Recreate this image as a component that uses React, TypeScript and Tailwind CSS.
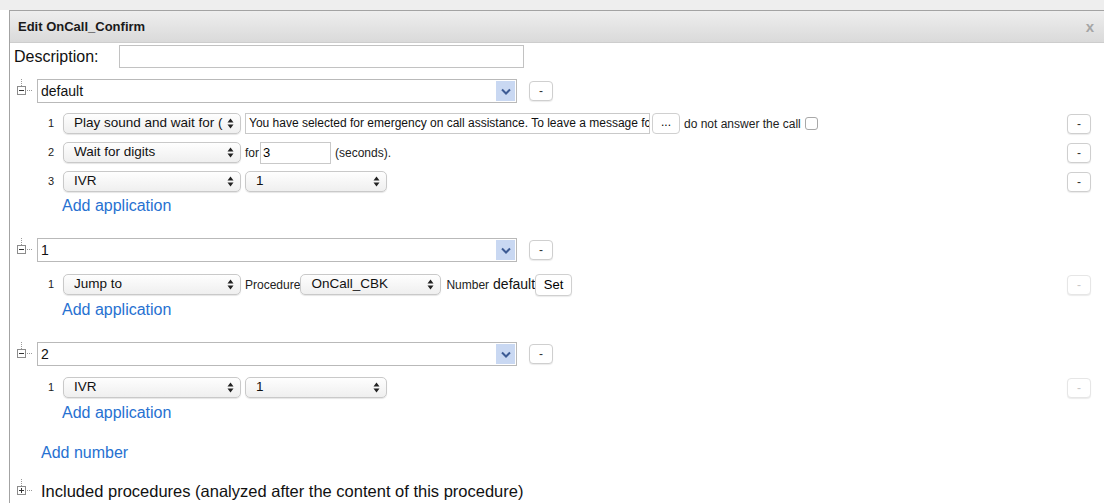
import type { ReactNode } from "react";

const sans = "font-['Liberation_Sans','Helvetica',Arial,sans-serif]";

// Little up/down arrows drawn at the end of a native-looking select
function Updown() {
    return (
        <svg width="7" height="11" viewBox="0 0 7 11" className="shrink-0">
            <path d="M3.5 0.5 L6.5 4.5 L0.5 4.5 Z" fill="#222" />
            <path d="M3.5 10.5 L6.5 6.5 L0.5 6.5 Z" fill="#222" />
        </svg>
    );
}

function MacSelect({ w, children }: { w: string; children: ReactNode }) {
    return (
        <div
            className={`${w} h-[21px] shrink-0 flex items-center justify-between gap-[3px] rounded-[5px] border border-[#c9c9c9] bg-gradient-to-b from-[#fefefe] to-[#efefef] shadow-[0_1px_1px_rgba(0,0,0,0.10)] pl-[10px] pr-[6px] text-[13.5px] text-[#111]`}
        >
            <span className="flex-1 overflow-hidden whitespace-nowrap">{children}</span>
            <Updown />
        </div>
    );
}

function MinusButton({ disabled = false }: { disabled?: boolean }) {
    return (
        <button
            type="button"
            className={`w-[24px] h-[20px] shrink-0 rounded-[4px] border bg-white text-[12px] leading-none flex items-center justify-center shadow-[0_1px_1px_rgba(0,0,0,0.08)] ${
                disabled ? "border-[#e6e6e6] text-[#c8c8c8]" : "border-[#cfcfcf] text-[#333]"
            }`}
        >
            -
        </button>
    );
}

// Tree toggle: boxed minus/plus with dotted connector lines
function TreeToggle({ open = true }: { open?: boolean }) {
    return (
        <svg width="20" height="24" viewBox="0 0 20 24" className="shrink-0">
            <line x1="4.5" y1="0" x2="4.5" y2="7" stroke="#9a9a9a" strokeDasharray="1 1" />
            <rect x="0.5" y="7.5" width="8" height="8" fill="#fff" stroke="#8c8c8c" />
            <line x1="2" y1="11.5" x2="7" y2="11.5" stroke="#333" />
            {!open && <line x1="4.5" y1="9" x2="4.5" y2="14" stroke="#333" />}
            <line x1="10" y1="11.5" x2="16" y2="11.5" stroke="#9a9a9a" strokeDasharray="1 1" />
        </svg>
    );
}

function NumberCombo({ value }: { value: string }) {
    return (
        <div className="flex items-center">
            <TreeToggle />
            <div className="w-[480px] h-[24px] border border-[#b9b9b9] bg-white flex items-center justify-between pl-[3px] pr-[1px] text-[14px] text-[#111]">
                <span>{value}</span>
                <div className="w-[19px] h-[20px] bg-[#c9d8f2] flex items-center justify-center">
                    <svg width="10" height="7" viewBox="0 0 10 7">
                        <path d="M1 1.5 L5 5.5 L9 1.5" fill="none" stroke="#3d5b94" strokeWidth="2" />
                    </svg>
                </div>
            </div>
            <div className="ml-[12px]">
                <MinusButton />
            </div>
        </div>
    );
}

function AppRow({ n, children, disabled = false }: { n: number; children: ReactNode; disabled?: boolean }) {
    return (
        <div className="h-[21px] flex items-center">
            <span className="w-[25px] pl-[10px] text-[11px] text-[#222]">{n}</span>
            <div className="flex-1 flex items-center gap-[4px]">{children}</div>
            <MinusButton disabled={disabled} />
        </div>
    );
}

function AddApplication({ mt }: { mt: string }) {
    return <div className={`${mt} h-[20px] pl-[24px] text-[16px] leading-[20px] text-[#2771d1]`}>Add application</div>;
}

export default function App() {
    return (
        <div className={`${sans} w-[1104px] h-[503px] overflow-hidden bg-white`}>
            <div className="h-[10px] bg-[#eeeeee]" />
            <div className="ml-[9px] h-[493px] border-l border-t border-[#a3a3a3]">
                {/* title bar */}
                <div className="h-[32px] flex items-center justify-between bg-gradient-to-b from-[#eeeeee] to-[#dadada] border-b border-[#cdcdcd] pl-[8px] pr-[10px]">
                    <span className="text-[13px] font-bold text-[#1a1a1a]">Edit OnCall_Confirm</span>
                    <span className="text-[15px] font-bold text-[#a5a5a5] leading-none">x</span>
                </div>

                <div className="pr-[13px]">
                    <div className="mt-[2px] h-[23px] flex items-center">
                        <span className="w-[109px] pl-[4px] text-[16px] text-[#111]">Description:</span>
                        <div className="w-[405px] h-[23px] border border-[#c2c2c2] bg-white" />
                    </div>

                    {/* number "default" */}
                    <div className="mt-[11px] pl-[7px]">
                        <NumberCombo value="default" />
                    </div>
                    <div className="mt-[10px] pl-[28px] flex flex-col gap-[8px]">
                        <AppRow n={1}>
                            <MacSelect w="w-[178px]">Play sound and wait for (</MacSelect>
                            <div className="w-[405px] h-[21px] border border-[#c9c9c9] bg-white pl-[3px] text-[12px] leading-[19px] text-[#111] overflow-hidden whitespace-nowrap">
                                You have selected for emergency on call assistance. To leave a message fc
                            </div>
                            <div className="w-[28px] h-[21px] -ml-[2px] rounded-[4px] border border-[#d0d0d0] bg-white text-[12px] leading-[17px] text-center">
                                ...
                            </div>
                            <span className="text-[12px] text-[#222]">do not answer the call</span>
                            <div className="w-[13px] h-[13px] rounded-[3px] border border-[#a8a8a8] bg-white" />
                        </AppRow>
                        <AppRow n={2}>
                            <MacSelect w="w-[178px]">Wait for digits</MacSelect>
                            <span className="-mr-[3px] text-[12px] text-[#222]">for</span>
                            <div className="w-[71px] h-[22px] border border-[#c9c9c9] bg-white pl-[2px] text-[13px] leading-[20px]">3</div>
                            <span className="text-[12px] text-[#222]">(seconds).</span>
                        </AppRow>
                        <AppRow n={3}>
                            <MacSelect w="w-[178px]">IVR</MacSelect>
                            <MacSelect w="w-[142px]">1</MacSelect>
                        </AppRow>
                    </div>
                    <div className="pl-[28px]">
                        <AddApplication mt="mt-[4px]" />
                    </div>

                    {/* number 1 */}
                    <div className="mt-[22px] pl-[7px]">
                        <NumberCombo value="1" />
                    </div>
                    <div className="mt-[12px] pl-[28px]">
                        <AppRow n={1} disabled>
                            <MacSelect w="w-[178px]">Jump to</MacSelect>
                            <span className="-mr-[4px] text-[12px] text-[#222]">Procedure</span>
                            <MacSelect w="w-[141px]">OnCall_CBK</MacSelect>
                            <span className="ml-[1px] text-[12px] text-[#222]">Number</span>
                            <span className="text-[14px] text-[#111]">default</span>
                            <div className="w-[37px] h-[22px] -ml-[4px] rounded-[4px] border border-[#d0d0d0] bg-white text-[13px] leading-[20px] text-center shadow-[0_1px_1px_rgba(0,0,0,0.08)]">
                                Set
                            </div>
                        </AppRow>
                    </div>
                    <div className="pl-[28px]">
                        <AddApplication mt="mt-[5px]" />
                    </div>

                    {/* number 2 */}
                    <div className="mt-[22px] pl-[7px]">
                        <NumberCombo value="2" />
                    </div>
                    <div className="mt-[11px] pl-[28px]">
                        <AppRow n={1} disabled>
                            <MacSelect w="w-[178px]">IVR</MacSelect>
                            <MacSelect w="w-[142px]">1</MacSelect>
                        </AppRow>
                    </div>
                    <div className="pl-[28px]">
                        <AddApplication mt="mt-[5px]" />
                    </div>

                    <div className="mt-[20px] h-[20px] pl-[31px] text-[16px] leading-[20px] text-[#2771d1]">Add number</div>

                    <div className="mt-[16px] pl-[7px] flex items-center">
                        <TreeToggle open={false} />
                        <span className="ml-[4px] text-[16.5px] text-[#111]">
                            Included procedures (analyzed after the content of this procedure)
                        </span>
                    </div>
                </div>
            </div>
        </div>
    );
}
